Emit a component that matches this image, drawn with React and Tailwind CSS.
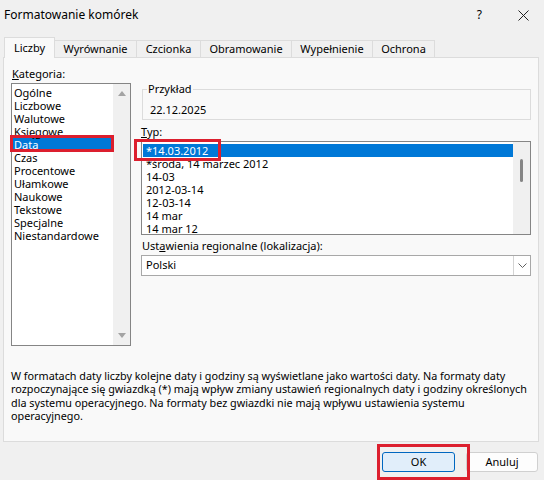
import React from 'react';

const categories = [
    'Ogólne', 'Liczbowe', 'Walutowe', 'Księgowe', 'Data', 'Czas', 'Procentowe',
    'Ułamkowe', 'Naukowe', 'Tekstowe', 'Specjalne', 'Niestandardowe',
];

const types = [
    '*14.03.2012', '*środa, 14 marzec 2012', '14-03', '2012-03-14', '12-03-14', '14 mar', '14 mar 12',
];

const tabs = [
    { name: 'Liczby', w: 'w-[51px]' },
    { name: 'Wyrównanie', w: 'w-[82px]' },
    { name: 'Czcionka', w: 'w-[64px]' },
    { name: 'Obramowanie', w: 'w-[91px]' },
    { name: 'Wypełnienie', w: 'w-[81px]' },
    { name: 'Ochrona', w: 'w-[62px]' },
];

const App = () => {
    return (
        <div className="relative w-[544px] h-[480px] overflow-hidden bg-[#f0f0f0] text-[11px] text-black font-['Noto_Sans',sans-serif]">
            {/* title bar */}
            <div className="flex items-center h-[30px] pl-[4px] pr-[15px]">
                <span className="text-[12px] flex-1">Formatowanie komórek</span>
                <span className="text-[12px] mr-[36px]">?</span>
                <svg width="11" height="11" viewBox="0 0 11 11">
                    <path d="M0.5 0.5 L10.5 10.5 M10.5 0.5 L0.5 10.5" stroke="#222" strokeWidth="1" />
                </svg>
            </div>

            {/* tabs */}
            <div className="flex items-end h-[27px] pl-[4px]">
                {tabs.map((t, i) => (
                    i === 0 ? (
                        <div key={t.name} className={`${t.w} h-[21px] -mb-px relative z-10 flex items-center justify-center bg-[#f9f9f9] border border-b-0 border-[#dcdcdc]`}>
                            {t.name}
                        </div>
                    ) : (
                        <div key={t.name} className={`${t.w} h-[17px] flex items-center justify-center border border-l-0 border-b-0 border-[#dcdcdc] bg-[#f0f0f0]`}>
                            {t.name}
                        </div>
                    )
                ))}
            </div>

            {/* panel */}
            <div className="ml-[3px] w-[536px] h-[385px] bg-[#f9f9f9] border border-[#dcdcdc]">
                <div className="flex">
                    {/* left column */}
                    <div className="pl-[7px] pt-[9px]">
                        <div className="h-[14px] leading-[14px] pl-px"><span className="underline">K</span>ategoria:</div>
                        <div className="mt-[2px] w-[120px] h-[263px] bg-white border border-[#858585] flex">
                            <div className="flex-1 pt-[2px]">
                                {categories.map((c) => (
                                    <div
                                        key={c}
                                        className={c === 'Data'
                                            ? 'h-[13px] leading-[13px] pl-[2px] bg-[#0078d7] text-white'
                                            : 'h-[13px] leading-[13px] pl-[2px]'}
                                    >
                                        {c}
                                    </div>
                                ))}
                            </div>
                            <div className="w-[17px] bg-[#f0f0f0] flex flex-col items-center justify-between py-[7px]">
                                <svg width="8" height="5" viewBox="0 0 8 5"><path d="M0 5 L4 0 L8 5 Z" fill="#a3a3a3" /></svg>
                                <svg width="8" height="5" viewBox="0 0 8 5"><path d="M0 0 L4 5 L8 0 Z" fill="#a3a3a3" /></svg>
                            </div>
                        </div>
                    </div>

                    {/* right column */}
                    <div className="ml-[10px] w-[390px]">
                        <div className="relative mt-[31px] h-[31px] border border-[#dcdcdc] ml-px">
                            <span className="absolute -top-[8px] left-[4px] px-px bg-[#f9f9f9] leading-[14px]">Przykład</span>
                            <div className="pt-[13px] pl-[7px] leading-[14px]">22.12.2025</div>
                        </div>
                        <div className="mt-[5px] h-[14px] leading-[14px]"><span className="underline">T</span>yp:</div>
                        <div className="mt-[2px] h-[94px] bg-white border border-[#858585] flex">
                            <div className="flex-1 pt-[2px] pl-px">
                                {types.map((t, i) => (
                                    <div
                                        key={t}
                                        className={i === 0
                                            ? 'h-[13px] leading-[13px] pl-[3px] bg-[#0078d7] text-white'
                                            : 'h-[13px] leading-[13px] pl-[3px]'}
                                    >
                                        {t}
                                    </div>
                                ))}
                            </div>
                            <div className="w-[17px] bg-[#f0f0f0] flex justify-center pt-[17px]">
                                <div className="w-[3px] h-[23px] rounded-full bg-[#858585]" />
                            </div>
                        </div>
                        <div className="mt-[4px] h-[14px] leading-[14px] pl-px">Ust<span className="underline">a</span>wienia regionalne (lokalizacja):</div>
                        <div className="mt-[2px] h-[21px] bg-white border border-[#a8a8a8] flex items-center">
                            <span className="flex-1 pl-[4px]">Polski</span>
                            <div className="w-[17px] h-full border-l border-[#d4d4d4] flex items-center justify-center">
                                <svg width="9" height="5" viewBox="0 0 9 5">
                                    <path d="M0.5 0.5 L4.5 4.5 L8.5 0.5" stroke="#606060" strokeWidth="1" fill="none" />
                                </svg>
                            </div>
                        </div>
                    </div>
                </div>

                {/* description */}
                <div className="mt-[23px] pl-[7px] text-[10.8px] leading-[13.3px] whitespace-nowrap">
                    W formatach daty liczby kolejne daty i godziny są wyświetlane jako wartości daty. Na formaty daty<br />
                    rozpoczynające się gwiazdką (*) mają wpływ zmiany ustawień regionalnych daty i godziny określonych<br />
                    dla systemu operacyjnego. Na formaty bez gwiazdki nie mają wpływu ustawienia systemu<br />
                    operacyjnego.
                </div>
            </div>

            {/* buttons */}
            <div className="flex justify-end gap-[11px] pr-[6px] mt-[10px]">
                <button className="w-[73px] h-[20px] rounded-[3px] border border-[#0067c0] bg-[#e1eefa] text-[11px]">OK</button>
                <button className="w-[72px] h-[20px] rounded-[3px] border border-[#d0d0d0] bg-[#fdfdfd] text-[11px]">Anuluj</button>
            </div>

            {/* red annotation boxes */}
            <div className="absolute left-[10px] top-[135px] w-[104px] h-[17px] border-[3px] border-[#dc1f2e]" />
            <div className="absolute left-[134px] top-[139px] w-[87px] h-[22px] border-[3px] border-[#dc1f2e]" />
            <div className="absolute left-[377px] top-[444px] w-[93px] h-[36px] border-[3px] border-[#dc1f2e]" />
        </div>
    );
};

export default App;
